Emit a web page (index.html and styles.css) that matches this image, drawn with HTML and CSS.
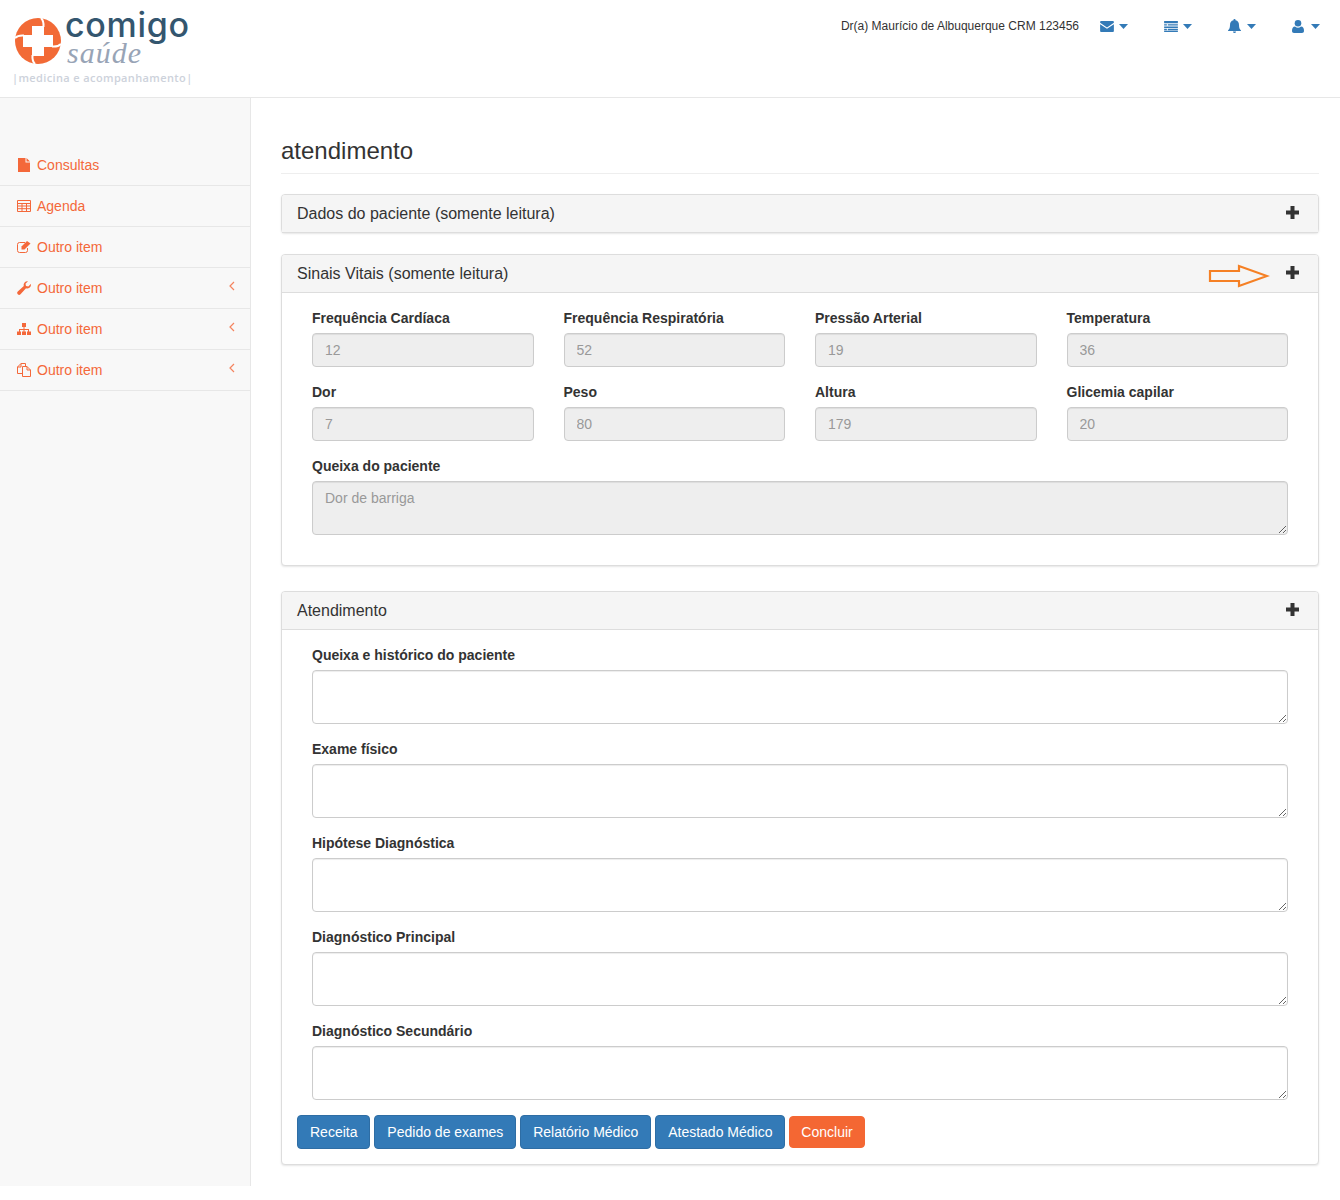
FILE: index.html
```html
<!DOCTYPE html>
<html>

<head>
    <meta charset="utf-8" />
    <title>atendimento</title>
    <link rel="stylesheet" href="styles.css">
</head>

<body>
    <svg class="defs" width="0" height="0">
        <symbol id="i-plus" viewBox="0 0 13 13"><path d="M4.500 0h4v4.500H13v4H8.500V13h-4V8.500H0v-4h4.500z" /></symbol>
        <symbol id="i-caret" viewBox="0 0 9 5"><path d="M0 0h9L4.500 5z" /></symbol>
        <symbol id="i-chevron" viewBox="0 0 6 10"><path d="M5 1L1 5l4 4" fill="none" stroke="currentColor" stroke-width="1.200" /></symbol>
    </svg>

    <header class="topbar">
        <div class="logo">
            <svg class="logo-mark" width="48" height="48" viewBox="0 0 48 48">
                <circle cx="24" cy="24" r="23" fill="#f26a36" />
                <path d="M18 9h12v9h9v12h-9v9H18v-9H9V18h9z" fill="#fff" />
                <path d="M29.500 10Q30 4 27 1M38 29.500Q44 30 47 27M18.500 38Q18 44 21 47M10 18.500Q4 18 1 21" fill="none" stroke="#fff" stroke-width="2" />
            </svg>
            <span class="logo-name">comigo</span>
            <span class="logo-sub">saúde</span>
            <span class="logo-tag">|medicina e acompanhamento|</span>
        </div>
        <div class="user-menu">
            <span class="user-name">Dr(a) Maurício de Albuquerque CRM 123456</span>
            <a class="user-link">
                <svg width="14" height="11" viewBox="0 0 15 12"><path d="M1 0h13a1 1 0 0 1 1 1v1L7.500 7 0 2V1a1 1 0 0 1 1-1zM0 3.500L7.500 8.500 15 3.500V11a1 1 0 0 1-1 1H1a1 1 0 0 1-1-1z" /></svg>
                <svg class="caret" width="9" height="5"><use href="#i-caret" /></svg>
            </a>
            <a class="user-link">
                <svg width="14" height="11" viewBox="0 0 15 12"><path d="M0 0h15v2.500H0zM0 3.500h3v1.500H0zM4 3.500h11v1.500H4zM0 6h15v1.500H0zM0 8.500h3V10H0zM4 8.500h11V10H4zM0 10.500h15V12H0z" /></svg>
                <svg class="caret" width="9" height="5"><use href="#i-caret" /></svg>
            </a>
            <a class="user-link">
                <svg class="icon-bell" width="13" height="14" viewBox="0 0 13 14"><path d="M6.500 0a1 1 0 0 1 1 1.200C10 1.700 11 3.500 11 6c0 3 .8 4.200 2 5.500V12H0v-.5C1.200 10.200 2 9 2 6c0-2.500 1-4.300 3.500-4.800A1 1 0 0 1 6.500 0zM5 12.500h3a1.500 1.500 0 0 1-3 0z" /></svg>
                <svg class="caret" width="9" height="5"><use href="#i-caret" /></svg>
            </a>
            <a class="user-link">
                <svg class="icon-user" width="12" height="13" viewBox="0 0 12 13"><circle cx="6" cy="3.300" r="3.300" /><path d="M0 11c0-3 1-4.500 3-4.500 1 .8 2 1.200 3 1.200s2-.4 3-1.200c2 0 3 1.500 3 4.500 0 1.300-.8 2-2 2H2c-1.200 0-2-.7-2-2z" /></svg>
                <svg class="caret" width="9" height="5"><use href="#i-caret" /></svg>
            </a>
        </div>
    </header>

    <div class="wrapper">
        <nav class="sidebar">
            <ul class="side-menu">
                <li>
                    <svg width="14" height="14" viewBox="0 0 14 14"><path d="M1 0h7.500v4.500H13V14H1zM9.500 0L13 3.500H9.500z" /></svg>
                    Consultas
                </li>
                <li>
                    <svg width="14" height="12" viewBox="0 0 14 12"><path d="M.5.500h13v11H.5zM.5 3.500h13M.5 6h13M.5 8.700h13M5 3.500v8M9.500 3.500v8" fill="none" stroke="currentColor" /></svg>
                    Agenda
                </li>
                <li>
                    <svg width="14" height="12" viewBox="0 0 14 12"><path d="M10.500 7v2.500a2 2 0 0 1-2 2h-6a2 2 0 0 1-2-2v-6a2 2 0 0 1 2-2H8" fill="none" stroke="currentColor" /><path d="M4.500 5.500L10 0l3.500 2.500L7.500 8.500h-3z" /></svg>
                    Outro item
                </li>
                <li>
                    <svg width="14" height="14" viewBox="0 0 14 14"><path d="M14 3.500a3.800 3.800 0 0 1-5 3.700l-5.500 6a1.700 1.700 0 0 1-2.700-2.700l6-5.500A3.800 3.800 0 0 1 11 .200L8.500 2.700l.5 2.300 2.300.5L13.800 3z" /></svg>
                    Outro item
                    <svg class="chevron" width="6" height="10"><use href="#i-chevron" /></svg>
                </li>
                <li>
                    <svg width="14" height="12" viewBox="0 0 14 12"><path d="M5 0h4v4H7.500v2H12v2.500h2V12h-4V8.500h1V7H7.500v1.500H9V12H5V8.500h1.500V7H3v1.500h1V12H0V8.500h2V6h4.500V4H5z" /></svg>
                    Outro item
                    <svg class="chevron" width="6" height="10"><use href="#i-chevron" /></svg>
                </li>
                <li>
                    <svg width="14" height="14" viewBox="0 0 14 14"><path d="M8.500 3.500v-3H4L.5 4v6.500h5M4 .500V4H.5M5.500 13.500v-10h4.500l3.500 3.500v6.500zM10 3.500V7h3.500" fill="none" stroke="currentColor" /></svg>
                    Outro item
                    <svg class="chevron" width="6" height="10"><use href="#i-chevron" /></svg>
                </li>
            </ul>
        </nav>

        <main class="content">
            <h1 class="page-title">atendimento</h1>

            <section class="panel panel-closed">
                <div class="panel-heading">
                    <span>Dados do paciente (somente leitura)</span>
                    <svg class="plus" width="13" height="13"><use href="#i-plus" /></svg>
                </div>
            </section>

            <section class="panel panel-vitals">
                <div class="panel-heading">
                    <span>Sinais Vitais (somente leitura)</span>
                    <svg class="arrow" width="62" height="24" viewBox="0 0 62 24"><path d="M2 7h29V2l28 10-28 10v-5H2z" fill="none" stroke="#f58025" stroke-width="2.200" /></svg>
                    <svg class="plus" width="13" height="13"><use href="#i-plus" /></svg>
                </div>
                <div class="panel-body">
                    <div class="fields">
                        <div class="field"><label>Frequência Cardíaca</label><input type="text" value="12" disabled></div>
                        <div class="field"><label>Frequência Respiratória</label><input type="text" value="52" disabled></div>
                        <div class="field"><label>Pressão Arterial</label><input type="text" value="19" disabled></div>
                        <div class="field"><label>Temperatura</label><input type="text" value="36" disabled></div>
                        <div class="field"><label>Dor</label><input type="text" value="7" disabled></div>
                        <div class="field"><label>Peso</label><input type="text" value="80" disabled></div>
                        <div class="field"><label>Altura</label><input type="text" value="179" disabled></div>
                        <div class="field"><label>Glicemia capilar</label><input type="text" value="20" disabled></div>
                        <div class="field field-full"><label>Queixa do paciente</label><textarea disabled>Dor de barriga</textarea></div>
                    </div>
                </div>
            </section>

            <section class="panel">
                <div class="panel-heading">
                    <span>Atendimento</span>
                    <svg class="plus" width="13" height="13"><use href="#i-plus" /></svg>
                </div>
                <div class="panel-body">
                    <div class="fields">
                        <div class="field field-full"><label>Queixa e histórico do paciente</label><textarea></textarea></div>
                        <div class="field field-full"><label>Exame físico</label><textarea></textarea></div>
                        <div class="field field-full"><label>Hipótese Diagnóstica</label><textarea></textarea></div>
                        <div class="field field-full"><label>Diagnóstico Principal</label><textarea></textarea></div>
                        <div class="field field-full"><label>Diagnóstico Secundário</label><textarea></textarea></div>
                    </div>
                    <div class="actions">
                        <a class="btn">Receita</a>
                        <a class="btn">Pedido de exames</a>
                        <a class="btn">Relatório Médico</a>
                        <a class="btn">Atestado Médico</a>
                        <a class="btn btn-orange">Concluir</a>
                    </div>
                </div>
            </section>
        </main>
    </div>
</body>

</html>
```

FILE: styles.css
```css
* {
    box-sizing: border-box;
    margin: 0;
    padding: 0;
}

body {
    font-family: "Liberation Sans", Arial, sans-serif;
    font-size: 14px;
    line-height: 20px;
    color: #333;
    background: #fff;
}

.defs {
    display: block;
    height: 0;
}

svg {
    fill: currentColor;
    flex: none;
}

/* top bar */
.topbar {
    display: flex;
    justify-content: space-between;
    height: 98px;
    border-bottom: 1px solid #e7e7e7;
}

.logo {
    position: relative;
    width: 250px;
}

.logo-mark {
    position: absolute;
    left: 14px;
    top: 17px;
}

.logo-name {
    position: absolute;
    left: 65px;
    top: 10px;
    font-family: Inter, sans-serif;
    font-size: 34px;
    font-weight: 500;
    line-height: 30px;
    letter-spacing: .7px;
    color: #34566f;
}

.logo-sub {
    position: absolute;
    left: 67px;
    top: 41px;
    font-family: "Liberation Serif", serif;
    font-style: italic;
    font-size: 30px;
    line-height: 24px;
    letter-spacing: 1px;
    color: #98a4b6;
}

.logo-tag {
    position: absolute;
    left: 12px;
    top: 70px;
    font-family: "Open Sans", sans-serif;
    font-size: 11px;
    font-weight: 600;
    line-height: 16px;
    letter-spacing: .38px;
    color: #cdd2db;
    white-space: nowrap;
}

.user-menu {
    display: flex;
    align-items: center;
    height: 52px;
    padding-right: 20px;
    font-size: 12px;
}

.user-name {
    margin-right: 20px;
}

.user-link {
    display: flex;
    align-items: center;
    justify-content: flex-end;
    gap: 5px;
    width: 29px;
    margin-left: 35px;
    color: #337ab7;
}

.user-link:first-of-type {
    margin-left: 0;
}

.icon-bell {
    margin-right: 1px;
}

.icon-user {
    margin-right: 2px;
}

/* sidebar */
.wrapper {
    display: flex;
    min-height: 1088px;
}

.sidebar {
    width: 251px;
    flex: none;
    padding-top: 47px;
    background: #f8f8f8;
    border-right: 1px solid #e7e7e7;
}

.side-menu {
    list-style: none;
}

.side-menu li {
    position: relative;
    display: flex;
    align-items: center;
    gap: 6px;
    height: 41px;
    padding-left: 17px;
    color: #f4683a;
    border-bottom: 1px solid #e7e7e7;
}

.side-menu .chevron {
    position: absolute;
    right: 15px;
    top: 13px;
    opacity: .8;
}

/* main */
.content {
    flex: 1;
    padding: 0 21px 0 30px;
}

.page-title {
    margin-top: 39px;
    padding-bottom: 8px;
    font-size: 24px;
    font-weight: 400;
    line-height: 28px;
    border-bottom: 1px solid #eee;
}

.panel {
    margin-top: 25px;
    background: #fff;
    border: 1px solid #ddd;
    border-radius: 4px;
    box-shadow: 0 1px 2px rgba(0, 0, 0, .1);
}

.panel-closed {
    margin-top: 20px;
    height: 39px;
}

.panel-vitals {
    margin-top: 21px;
}

.panel-vitals .panel-body {
    padding-bottom: 30px;
}

.panel-heading {
    display: flex;
    align-items: center;
    height: 38px;
    padding: 0 19px 0 15px;
    font-size: 16px;
    background: #f5f5f5;
    border-bottom: 1px solid #ddd;
    border-radius: 3px 3px 0 0;
}

.panel-heading span {
    flex: 1;
}

.plus {
    margin-top: -2px;
    color: #333;
}

.arrow {
    margin-right: 16px;
    margin-top: 4px;
}

.panel-body {
    padding: 15px;
}

.fields {
    display: grid;
    grid-template-columns: repeat(4, 1fr);
    gap: 15px 30px;
    padding: 0 15px;
}

.field-full {
    grid-column: 1 / -1;
}

.field label {
    display: block;
    margin-bottom: 5px;
    font-weight: 700;
}

.field input,
.field textarea {
    display: block;
    width: 100%;
    padding: 6px 12px;
    font: inherit;
    color: #555;
    background: #fff;
    border: 1px solid #ccc;
    border-radius: 4px;
    box-shadow: inset 0 1px 1px rgba(0, 0, 0, .075);
}

.field input {
    height: 34px;
}

.field textarea {
    height: 54px;
    resize: vertical;
}

.field input:disabled,
.field textarea:disabled {
    background: #eee;
    opacity: 1;
    color: #999;
}

.actions {
    display: flex;
    align-items: center;
    gap: 3.9px;
    margin-top: 15px;
}

.btn {
    height: 34px;
    padding: 6px 12px;
    color: #fff;
    background: #337ab7;
    border: 1px solid #2e6da4;
    border-radius: 4px;
}

.btn-orange {
    height: 32px;
    padding: 5px 11px;
    background: #f46733;
    border-color: #f46733;
}
```
